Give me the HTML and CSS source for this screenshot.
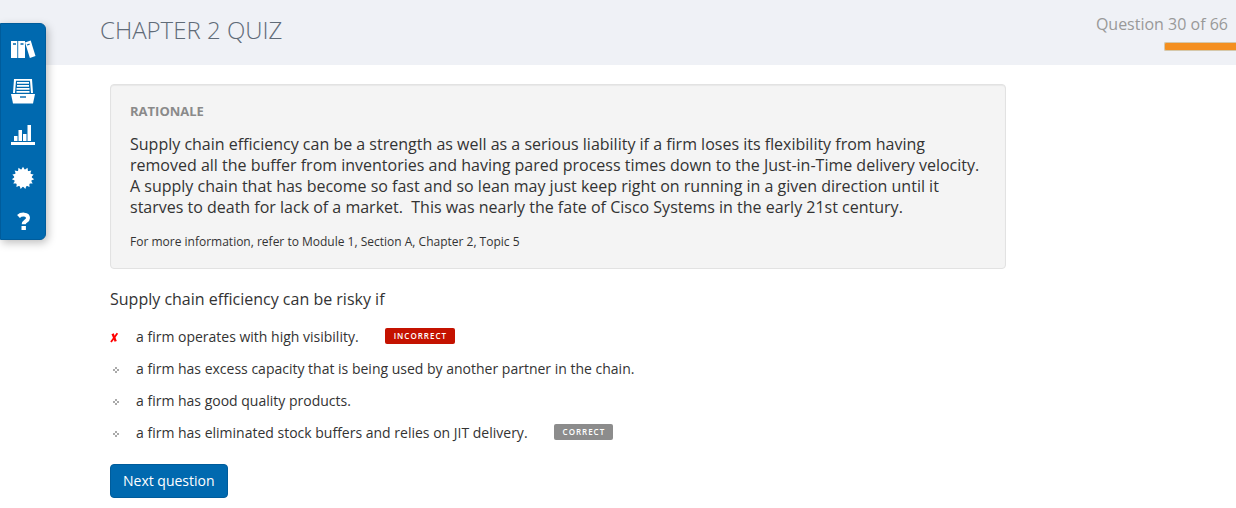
FILE: index.html
```html
<!DOCTYPE html>
<html lang="en">
<head>
<meta charset="utf-8">
<meta name="viewport" content="width=device-width, initial-scale=1">
<title>Chapter 2 Quiz</title>
<link rel="stylesheet" href="styles.css">
</head>
<body>
<header class="quiz-header">
  <h1 class="quiz-title">CHAPTER 2 QUIZ</h1>
  <div class="status">
    <p class="status-text">Question 30 of 66</p>
    <div class="progress" role="progressbar" aria-label="Quiz progress" aria-valuemin="0" aria-valuemax="66" aria-valuenow="30"></div>
  </div>
</header>

<nav class="side-nav" aria-label="Main">
  <a class="side-link" href="#library" aria-label="Library">
    <svg width="26" height="26" viewBox="0 0 26 26" fill="#fff"><path d="M1 6h6.300v17H1zM8.200 6H15v17H8.200z"/><path d="M15 7.500l5.700-1.900L25.500 21l-5.600 2z"/><path d="M3 9h3M10.500 9h3M17 10l2.600-.9" stroke="#0069af" stroke-width="1.300"/></svg>
  </a>
  <a class="side-link" href="#catalog" aria-label="Catalog">
    <svg width="26" height="26" viewBox="0 0 26 26" fill="#fff"><path d="M4 1h18l1 14h-2L20 2.700H6L5 15H3z"/><path d="M7 4h12v1.700H7zM7 7h12v1.700H7zM6.500 10h13v1.700h-13zM6.500 13h13v1.700h-13z"/><path d="M1 16h24l-2 9.500H3z"/><path d="M10 19h6" stroke="#0069af" stroke-width="1.400"/></svg>
  </a>
  <a class="side-link" href="#reports" aria-label="Reports">
    <svg width="26" height="26" viewBox="0 0 26 26" fill="#fff"><path d="M4 15h3.500v5H4zM8.500 9H12v11H8.500zM13 13h3.500v7H13zM17.500 4H21v16h-3.500zM1 21h24v3H1z"/></svg>
  </a>
  <a class="side-link" href="#badges" aria-label="Badges">
    <svg width="26" height="26" viewBox="0 0 26 26" fill="#fff"><circle cx="13" cy="14" r="8.800"/><path d="M13 2.800l9.700 16.800H3.300z"/><path d="M13 2.800l9.700 16.800H3.300z" transform="rotate(24 13 14)"/><path d="M13 2.800l9.700 16.800H3.300z" transform="rotate(48 13 14)"/><path d="M13 2.800l9.700 16.800H3.300z" transform="rotate(72 13 14)"/><path d="M13 2.800l9.700 16.800H3.300z" transform="rotate(96 13 14)"/></svg>
  </a>
  <a class="side-link" href="#help" aria-label="Help">
    <svg width="26" height="26" viewBox="0 0 26 26"><path d="M8.500 9.500C11 7 18 6.500 18 11c0 3.300-4.300 2.800-4.300 6.200" fill="none" stroke="#fff" stroke-width="4"/><path d="M11.500 19h4.400v4h-4.400z" fill="#fff"/></svg>
  </a>
</nav>

<main class="content">
  <section class="rationale">
    <h2 class="rationale-title">RATIONALE</h2>
    <p class="rationale-text">Supply chain efficiency can be a strength as well as a serious liability if a firm loses its flexibility from having removed all the buffer from inventories and having pared process times down to the Just-in-Time delivery velocity. A supply chain that has become so fast and so lean may just keep right on running in a given direction until it starves to death for lack of a market.&nbsp; This was nearly the fate of Cisco Systems in the early 21st century.</p>
    <p class="rationale-ref">For more information, refer to Module 1, Section A, Chapter 2, Topic 5</p>
  </section>

  <h2 class="question">Supply chain efficiency can be risky if</h2>
  <ul class="answers">
    <li class="answer">
      <svg class="mark" width="12" height="12" viewBox="0 0 12 12"><path d="M1.500 3.200l2.200-.9L6.800 10l-2.200.8z" fill="#f00"/><path d="M7.400 2.300L1 11" stroke="#f00" stroke-width="1.800"/></svg>
      <span>a firm operates with high visibility.</span>
      <span class="tag tag-incorrect">INCORRECT</span>
    </li>
    <li class="answer">
      <svg class="mark" width="12" height="12" viewBox="0 0 12 12"><path d="M5 4h2v2H5zM3 6h2v2H3zM7 6h2v2H7zM5 8h2v2H5z" fill="#aaa"/></svg>
      <span>a firm has excess capacity that is being used by another partner in the chain.</span>
    </li>
    <li class="answer">
      <svg class="mark" width="12" height="12" viewBox="0 0 12 12"><path d="M5 4h2v2H5zM3 6h2v2H3zM7 6h2v2H7zM5 8h2v2H5z" fill="#aaa"/></svg>
      <span>a firm has good quality products.</span>
    </li>
    <li class="answer">
      <svg class="mark" width="12" height="12" viewBox="0 0 12 12"><path d="M5 4h2v2H5zM3 6h2v2H3zM7 6h2v2H7zM5 8h2v2H5z" fill="#aaa"/></svg>
      <span>a firm has eliminated stock buffers and relies on JIT delivery.</span>
      <span class="tag tag-correct">CORRECT</span>
    </li>
  </ul>
  <button class="next" type="button">Next question</button>
</main>
</body>
</html>
```

FILE: styles.css
```css
* {
  box-sizing: border-box;
}

body {
  margin: 0;
  background: #fff;
  color: #333;
  font-family: "Open Sans", "Noto Sans", sans-serif;
}

h1, h2, p, ul {
  margin: 0;
  padding: 0;
}

.quiz-header {
  display: flex;
  justify-content: space-between;
  padding: 14px 0 14px 100px;
  background: #eff1f6;
}

.quiz-title {
  color: #5f6b78;
  font-size: 24px;
  font-weight: 300;
  line-height: 32px;
}

.status {
  display: flex;
  flex-direction: column;
  align-items: flex-end;
  gap: 8px;
}

.status-text {
  padding-right: 8px;
  color: #999;
  font-size: 16px;
  line-height: 20px;
}

.progress {
  width: 72px;
  height: 9px;
  border: 1px solid #d5c8ab;
  border-right: 0;
  border-radius: 2px 0 0 2px;
  background: #f48f20;
}

.side-nav {
  position: fixed;
  top: 23px;
  left: 0;
  display: flex;
  flex-direction: column;
  width: 46px;
  border: 1px solid #005c9b;
  border-radius: 0 6px 6px 0;
  background: #0069af;
  box-shadow: 2px 3px 8px rgba(0, 0, 0, 0.25);
}

.side-link {
  display: flex;
  justify-content: center;
  height: 43px;
  padding-top: 11px;
}

.content {
  max-width: 1006px;
  padding: 19px 0 10px 110px;
}

.rationale {
  padding: 18px 19px 17px;
  border: 1px solid #e2e2e2;
  border-radius: 4px;
  background: #f4f4f4;
  box-shadow: inset 0 1px 1px rgba(0, 0, 0, 0.05);
}

.rationale-title {
  color: #8a8a8a;
  font-size: 13px;
  font-weight: 700;
  line-height: 16px;
}

.rationale-text {
  margin-top: 15px;
  font-size: 16px;
  line-height: 21px;
}

.rationale-ref {
  margin-top: 15px;
  font-size: 12px;
  line-height: 18px;
}

.question {
  margin-top: 20px;
  font-size: 16px;
  font-weight: 400;
  line-height: 21px;
}

.answers {
  margin-top: 11px;
  list-style: none;
}

.answer {
  display: flex;
  align-items: center;
  height: 32px;
  font-size: 14px;
  line-height: 20px;
}

.mark {
  flex: none;
  margin-right: 14px;
}

.tag {
  margin: 0 0 2px 26px;
  padding: 0 8px 0 9px;
  border-radius: 2px;
  color: #fff;
  font-size: 8px;
  font-weight: 600;
  letter-spacing: 1px;
  line-height: 16px;
}

.tag-incorrect {
  background: #c41200;
}

.tag-correct {
  background: #8c8c8c;
}

.next {
  margin-top: 15px;
  padding: 6px 12px;
  border: 1px solid #005c9b;
  border-radius: 4px;
  background: #0069af;
  color: #fff;
  font-family: inherit;
  font-size: 14px;
  line-height: 20px;
}
```
